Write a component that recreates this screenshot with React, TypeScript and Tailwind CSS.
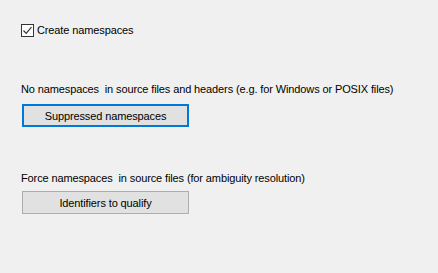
export default function App() {
  return (
    <div className="w-[438px] h-[273px] bg-[#f0f0f0] text-black text-[11px] tracking-[-0.12px] leading-[16px] font-['Liberation_Sans',Arial,sans-serif] pl-[21px] pt-[22px] whitespace-nowrap">
      {/* Create namespaces */}
      <label className="flex items-center gap-[3px] h-[16px]">
        <span className="w-[13px] h-[13px] border border-[#333333] bg-white flex items-center justify-center">
          <svg width="11" height="11" viewBox="0 0 11 11">
            <path d="M1.5 5.5 L4.2 8.3 L9.5 2.2" fill="none" stroke="#333333" strokeWidth="1.2" />
          </svg>
        </span>
        <span>Create namespaces</span>
      </label>

      {/* Suppressed */}
      <p className="mt-[43px] h-[16px]">No namespaces&nbsp; in source files and headers (e.g. for Windows or POSIX files)</p>
      <button className="mt-[7px] ml-[1px] w-[167px] h-[23px] bg-[#e1e1e1] border-2 border-[#0078d7] flex items-center justify-center">
        Suppressed namespaces
      </button>

      {/* Force */}
      <p className="mt-[43px] h-[16px]">Force namespaces&nbsp; in source files (for ambiguity resolution)</p>
      <button className="mt-[5px] ml-[1px] w-[167px] h-[23px] bg-[#e1e1e1] border border-[#adadad] flex items-center justify-center">
        Identifiers to qualify
      </button>
    </div>
  )
}
